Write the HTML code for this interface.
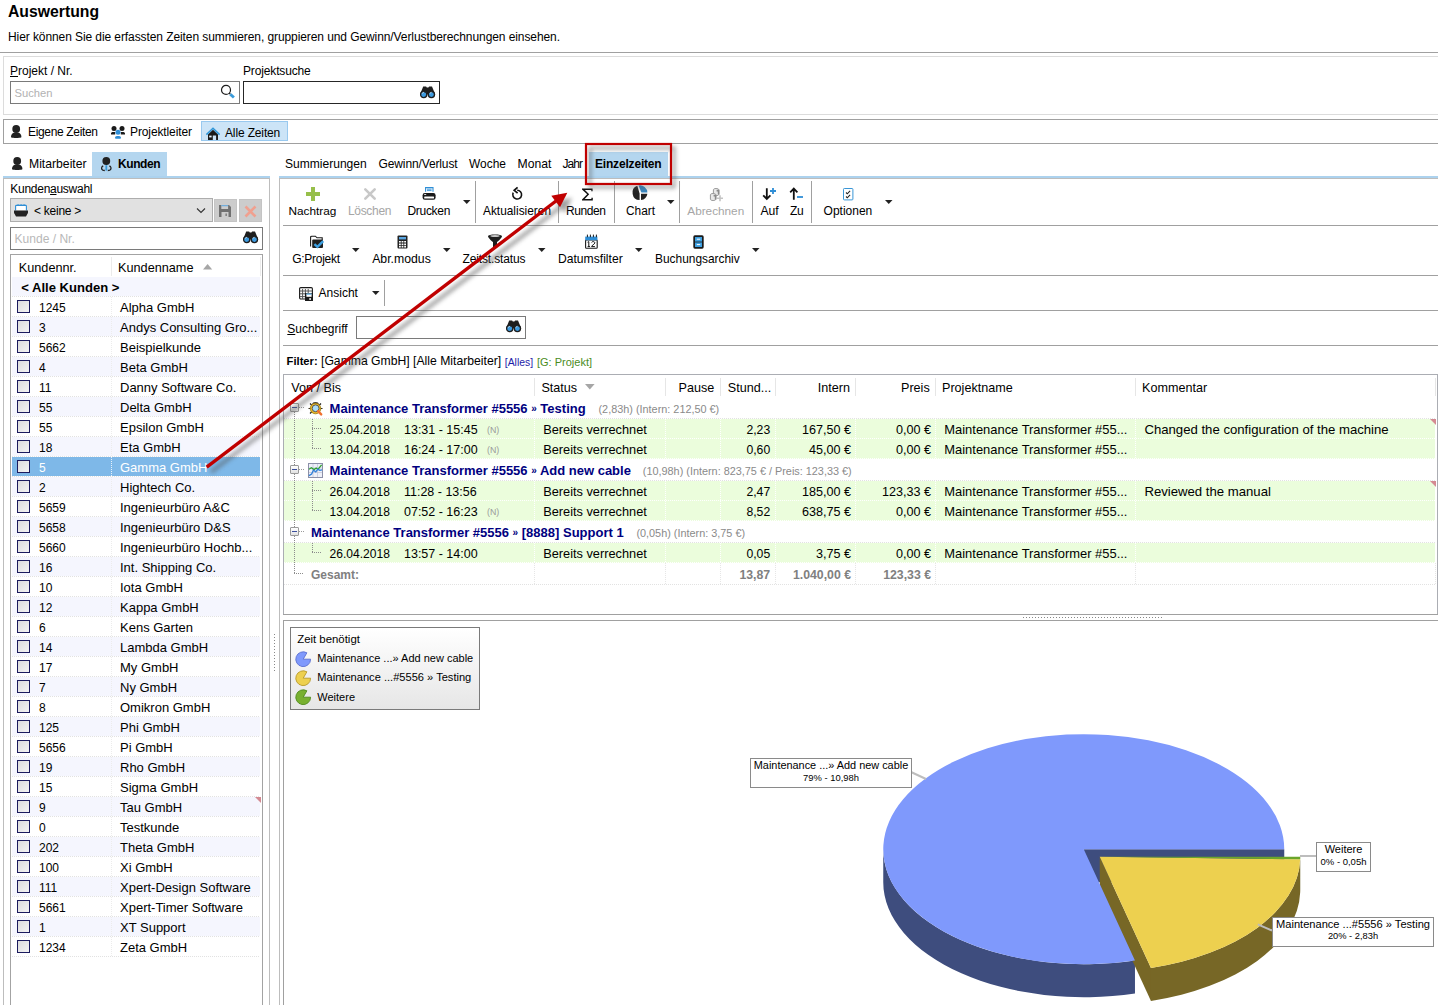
<!DOCTYPE html>
<html><head><meta charset="utf-8"><title>Auswertung</title>
<style>
html,body{margin:0;padding:0;}
body{width:1438px;height:1005px;overflow:hidden;position:relative;background:#fff;font-family:"Liberation Sans", sans-serif;}
.a{position:absolute;}
.t{position:absolute;white-space:pre;line-height:16px;font-family:"Liberation Sans", sans-serif;}
svg.a{overflow:visible;}
</style></head><body>
<div class="t" style="left:8.00px;top:4px;font-size:15.75px;font-weight:bold;color:#000;">Auswertung</div><div class="t" style="left:8.00px;top:29px;font-size:12px;font-weight:normal;color:#000;letter-spacing:-0.085px;">Hier können Sie die erfassten Zeiten summieren, gruppieren und Gewinn/Verlustberechnungen einsehen.</div><div class="a" style="left:0px;top:52px;width:1438px;height:1px;background:#a0a0a0"></div><div class="a" style="left:3px;top:56px;width:1440px;height:57px;border:1px solid #dcdcdc;box-sizing:border-box;height:59px"></div><div class="t" style="left:10.00px;top:63px;font-size:12px;font-weight:normal;color:#000;"><u>P</u>rojekt / Nr.</div><div class="a" style="left:10px;top:81px;width:230px;height:23px;border:1px solid #7a7a7a;box-sizing:border-box;background:#fff"></div><div class="t" style="left:14.50px;top:85px;font-size:11.2px;font-weight:normal;color:#b2b2b2;">Suchen</div><svg class="a" style="left:220px;top:84px;" width="18" height="18" viewBox="0 0 18 18"><circle cx="6" cy="5.9" r="4.5" fill="none" stroke="#1e1e1e" stroke-width="1.2"/><path d="M9.2 9.1l1 .9" stroke="#1e1e1e" stroke-width="1.6"/><path d="M10.3 10.2l3.6 3.3" stroke="#3a9ad9" stroke-width="2.9"/></svg><div class="t" style="left:243.00px;top:63px;font-size:12px;font-weight:normal;color:#000;letter-spacing:-0.143px;">Projektsuche</div><div class="a" style="left:243px;top:81px;width:197px;height:23px;border:1px solid #262626;box-sizing:border-box;background:#fff"></div><svg class="a" style="left:419.5px;top:85.5px;" width="16" height="13" viewBox="0 0 16 13"><path d="M3.2 .6h2.9l.7.9h1.6l.7-.9h2.9l3.3 8H0z" fill="#1e1e1e"/><circle cx="3.7" cy="8.6" r="3.1" fill="#3d9be0" stroke="#1e1e1e" stroke-width="1.3"/><circle cx="11.4" cy="8.6" r="3.1" fill="#3d9be0" stroke="#1e1e1e" stroke-width="1.3"/><path d="M2.2 7.6a1.8 1.8 0 0 1 1.6-1.3M9.9 7.6a1.8 1.8 0 0 1 1.6-1.3" stroke="#dff0fb" stroke-width=".8" fill="none"/></svg><div class="a" style="left:3px;top:119px;width:1440px;height:25px;border:1px solid #a0a0a0;box-sizing:border-box"></div><svg class="a" style="left:11px;top:125px;" width="11" height="13" viewBox="0 0 11 13"><circle cx="5.2" cy="4" r="3.9" fill="#222"/><path d="M0 12.2c0-3.4 2-4.6 5.2-4.6s5.2 1.2 5.2 4.6c-1.3.6-3 .8-5.2.8S1.3 12.8 0 12.2z" fill="#222"/></svg><div class="t" style="left:28.00px;top:124px;font-size:12px;font-weight:normal;color:#000;letter-spacing:-0.339px;">Eigene Zeiten</div><svg class="a" style="left:111px;top:125px;" width="15" height="14" viewBox="0 0 15 14"><circle cx="3" cy="3.4" r="2.5" fill="#1a1a1a"/><circle cx="11" cy="3.4" r="2.5" fill="#1a1a1a"/><path d="M0 9.6V8.4C0 7.4 1 6.9 2.2 6.9H4.2V9.6z" fill="#1a1a1a"/><path d="M14 9.6V8.4C14 7.4 13 6.9 11.8 6.9H9.8V9.6z" fill="#1a1a1a"/><circle cx="7" cy="7.3" r="2.5" fill="#2f8ed6"/><path d="M4 13c0-1.4.8-2.1 2-2.1h2c1.2 0 2 .7 2 2.1 0 .5-.4.8-1 .8H5c-.6 0-1-.3-1-.8z" fill="#2f8ed6"/></svg><div class="t" style="left:130.00px;top:124px;font-size:12px;font-weight:normal;color:#000;letter-spacing:-0.113px;">Projektleiter</div><div class="a" style="left:201px;top:121px;width:87px;height:20px;background:#cce4f7;border:1px solid #99c9ef;box-sizing:border-box"></div><svg class="a" style="left:205px;top:126px;" width="16" height="16" viewBox="0 0 16 16"><path d="M3 8.6L8 3.8l5 4.8v5.4h-1.9V9.4H7.8v4.6H3z" fill="#1a1a1a"/><rect x="4.2" y="9.6" width="2.4" height="1.8" fill="#e8f6ff"/><path d="M1.4 8.6L8 2.2l6.6 6.4" fill="none" stroke="#3096d8" stroke-width="1.5"/></svg><div class="t" style="left:225.00px;top:125px;font-size:12px;font-weight:normal;color:#000;letter-spacing:-0.140px;">Alle Zeiten</div><svg class="a" style="left:12px;top:157px;" width="11" height="13" viewBox="0 0 11 13"><circle cx="5.2" cy="4" r="3.9" fill="#222"/><path d="M0 12.2c0-3.4 2-4.6 5.2-4.6s5.2 1.2 5.2 4.6c-1.3.6-3 .8-5.2.8S1.3 12.8 0 12.2z" fill="#222"/></svg><div class="t" style="left:29.00px;top:156px;font-size:12.2px;font-weight:normal;color:#000;">Mitarbeiter</div><div class="a" style="left:92px;top:152px;width:75px;height:24px;background:#b4d6ef"></div><svg class="a" style="left:101px;top:157px;" width="11" height="15" viewBox="0 0 11 15"><circle cx="5.3" cy="4" r="3.9" fill="#222"/><path d="M2.2 8.8C.6 9.6.4 11.4.8 12.2c.4.8 1.6 1.3 3 1.3M8.4 8.8c1.6.8 1.8 2.6 1.4 3.4-.4.8-1.6 1.3-3 1.3" fill="none" stroke="#222" stroke-width="1.3"/><path d="M5.3 8.2v5.4" stroke="#3a9ad9" stroke-width="1.8"/></svg><div class="t" style="left:118.00px;top:156px;font-size:12px;font-weight:bold;color:#000;letter-spacing:-0.434px;">Kunden</div><div class="a" style="left:3px;top:176px;width:267px;height:2px;background:#acd2ee"></div><div class="a" style="left:3px;top:178px;width:267px;height:840px;border:1px solid #bdbdbd;box-sizing:border-box"></div><div class="t" style="left:10.30px;top:181px;font-size:12px;font-weight:normal;color:#000;letter-spacing:-0.27px;">Kunden<u>a</u>uswahl</div><div class="a" style="left:10px;top:198px;width:203px;height:24px;background:#e1e1e1;border:1px solid #adadad;box-sizing:border-box"></div><svg class="a" style="left:14px;top:204px;" width="14" height="13" viewBox="0 0 14 13"><path d="M1.6 6.4V2.2c0-.5.3-.8.8-.8h9.2c.5 0 .8.3.8.8v4.2" fill="#fff" stroke="#2f8ed6" stroke-width="1.1"/><path d="M3.2 1.2h2M6.2 1.2h2M9.2 1.2h2" stroke="#2f8ed6" stroke-width="1.3"/><path d="M0 6.4h14v2.2c0 .6-.2.9-.5 1.2L12 12.4H2L.5 9.8C.2 9.5 0 9.2 0 8.6z" fill="#222"/></svg><div class="t" style="left:34.00px;top:203px;font-size:12px;font-weight:normal;color:#000;letter-spacing:-0.259px;">&lt; keine &gt;</div><svg class="a" style="left:196px;top:207px;" width="10" height="7" viewBox="0 0 10 7"><path d="M1 1.5l4 4 4-4" fill="none" stroke="#333" stroke-width="1.1"/></svg><div class="a" style="left:214px;top:199px;width:23px;height:23px;background:#cccccc;border:1px solid #c4c4c4;box-sizing:border-box"></div><svg class="a" style="left:219px;top:205px;" width="12" height="12" viewBox="0 0 12 12"><path d="M0 0h10l2 2v10H0z" fill="#707070"/><path d="M2.3 0h6.8v4H2.3z" fill="#cccccc"/><path d="M2.3 .2h6.8v1H2.3z" fill="#5aa5e0"/><path d="M2.5 7h7v5h-7z" fill="#cccccc"/><path d="M6.5 8.5h1.3v2.5H6.5z" fill="#707070"/></svg><div class="a" style="left:239px;top:199px;width:23px;height:23px;background:#cccccc;border:1px solid #c4c4c4;box-sizing:border-box"></div><svg class="a" style="left:244px;top:205px;" width="13" height="13" viewBox="0 0 13 13"><path d="M1.5 1.5l10 10M11.5 1.5l-10 10" stroke="#f0a08f" stroke-width="2.6"/></svg><div class="a" style="left:10px;top:227px;width:253px;height:23px;border:1px solid #7a7a7a;box-sizing:border-box;background:#fff"></div><div class="t" style="left:14.50px;top:231px;font-size:12.05px;font-weight:normal;color:#b8b8b8;">Kunde / Nr.</div><svg class="a" style="left:242.5px;top:231px;" width="16" height="13" viewBox="0 0 16 13"><path d="M3.2 .6h2.9l.7.9h1.6l.7-.9h2.9l3.3 8H0z" fill="#1e1e1e"/><circle cx="3.7" cy="8.6" r="3.1" fill="#3d9be0" stroke="#1e1e1e" stroke-width="1.3"/><circle cx="11.4" cy="8.6" r="3.1" fill="#3d9be0" stroke="#1e1e1e" stroke-width="1.3"/><path d="M2.2 7.6a1.8 1.8 0 0 1 1.6-1.3M9.9 7.6a1.8 1.8 0 0 1 1.6-1.3" stroke="#dff0fb" stroke-width=".8" fill="none"/></svg><div class="a" style="left:10px;top:254px;width:253px;height:770px;border:1px solid #a3a3a3;box-sizing:border-box"></div><div class="t" style="left:18.80px;top:260px;font-size:12.7px;font-weight:normal;color:#000;">Kundennr.</div><div class="a" style="left:111px;top:257px;width:1px;height:19px;background:#ebebeb"></div><div class="t" style="left:118.00px;top:260px;font-size:12.7px;font-weight:normal;color:#000;">Kundenname</div><svg class="a" style="left:203px;top:264px;" width="10" height="6" viewBox="0 0 10 6"><path d="M0 5.5L4.6 0l4.6 5.5z" fill="#a6a6a6"/></svg><div class="a" style="left:260px;top:257px;width:1px;height:19px;background:#ebebeb"></div><div class="a" style="left:12px;top:277px;width:248px;height:19px;background:#f5f6fe"></div><div class="a" style="left:12px;top:296px;width:248px;height:1px;background-image:linear-gradient(to right,#e2e2e2 50%,transparent 50%);background-size:2px 1px;"></div><div class="t" style="left:21.30px;top:280px;font-size:13.05px;font-weight:bold;color:#000;">&lt; Alle Kunden &gt;</div><div class="a" style="left:12px;top:316px;width:248px;height:1px;background-image:linear-gradient(to right,#e2e2e2 50%,transparent 50%);background-size:2px 1px;"></div><div class="a" style="left:111px;top:297px;width:1px;height:19px;background-image:linear-gradient(to bottom,#ececec 50%,transparent 50%);background-size:1px 2px;"></div><div class="a" style="left:17px;top:300px;width:13px;height:13px;border:1px solid #1b1b5e;box-sizing:border-box;background:linear-gradient(135deg,#dcdcdc,#f4f4f4)"></div><div class="t" style="left:39.00px;top:300px;font-size:12.0px;font-weight:normal;color:#000;">1245</div><div class="t" style="left:120.00px;top:300px;font-size:13.0px;font-weight:normal;color:#000;">Alpha GmbH</div><div class="a" style="left:12px;top:317px;width:248px;height:19px;background:#f5f6fe"></div><div class="a" style="left:12px;top:336px;width:248px;height:1px;background-image:linear-gradient(to right,#e2e2e2 50%,transparent 50%);background-size:2px 1px;"></div><div class="a" style="left:111px;top:317px;width:1px;height:19px;background-image:linear-gradient(to bottom,#ececec 50%,transparent 50%);background-size:1px 2px;"></div><div class="a" style="left:17px;top:320px;width:13px;height:13px;border:1px solid #1b1b5e;box-sizing:border-box;background:linear-gradient(135deg,#dcdcdc,#f4f4f4)"></div><div class="t" style="left:39.00px;top:320px;font-size:12.0px;font-weight:normal;color:#000;">3</div><div class="t" style="left:120.00px;top:320px;font-size:13.0px;font-weight:normal;color:#000;">Andys Consulting Gro...</div><div class="a" style="left:12px;top:356px;width:248px;height:1px;background-image:linear-gradient(to right,#e2e2e2 50%,transparent 50%);background-size:2px 1px;"></div><div class="a" style="left:111px;top:337px;width:1px;height:19px;background-image:linear-gradient(to bottom,#ececec 50%,transparent 50%);background-size:1px 2px;"></div><div class="a" style="left:17px;top:340px;width:13px;height:13px;border:1px solid #1b1b5e;box-sizing:border-box;background:linear-gradient(135deg,#dcdcdc,#f4f4f4)"></div><div class="t" style="left:39.00px;top:340px;font-size:12.0px;font-weight:normal;color:#000;">5662</div><div class="t" style="left:120.00px;top:340px;font-size:13.0px;font-weight:normal;color:#000;">Beispielkunde</div><div class="a" style="left:12px;top:357px;width:248px;height:19px;background:#f5f6fe"></div><div class="a" style="left:12px;top:376px;width:248px;height:1px;background-image:linear-gradient(to right,#e2e2e2 50%,transparent 50%);background-size:2px 1px;"></div><div class="a" style="left:111px;top:357px;width:1px;height:19px;background-image:linear-gradient(to bottom,#ececec 50%,transparent 50%);background-size:1px 2px;"></div><div class="a" style="left:17px;top:360px;width:13px;height:13px;border:1px solid #1b1b5e;box-sizing:border-box;background:linear-gradient(135deg,#dcdcdc,#f4f4f4)"></div><div class="t" style="left:39.00px;top:360px;font-size:12.0px;font-weight:normal;color:#000;">4</div><div class="t" style="left:120.00px;top:360px;font-size:13.0px;font-weight:normal;color:#000;">Beta GmbH</div><div class="a" style="left:12px;top:396px;width:248px;height:1px;background-image:linear-gradient(to right,#e2e2e2 50%,transparent 50%);background-size:2px 1px;"></div><div class="a" style="left:111px;top:377px;width:1px;height:19px;background-image:linear-gradient(to bottom,#ececec 50%,transparent 50%);background-size:1px 2px;"></div><div class="a" style="left:17px;top:380px;width:13px;height:13px;border:1px solid #1b1b5e;box-sizing:border-box;background:linear-gradient(135deg,#dcdcdc,#f4f4f4)"></div><div class="t" style="left:39.00px;top:380px;font-size:12.0px;font-weight:normal;color:#000;">11</div><div class="t" style="left:120.00px;top:380px;font-size:13.0px;font-weight:normal;color:#000;">Danny Software Co.</div><div class="a" style="left:12px;top:397px;width:248px;height:19px;background:#f5f6fe"></div><div class="a" style="left:12px;top:416px;width:248px;height:1px;background-image:linear-gradient(to right,#e2e2e2 50%,transparent 50%);background-size:2px 1px;"></div><div class="a" style="left:111px;top:397px;width:1px;height:19px;background-image:linear-gradient(to bottom,#ececec 50%,transparent 50%);background-size:1px 2px;"></div><div class="a" style="left:17px;top:400px;width:13px;height:13px;border:1px solid #1b1b5e;box-sizing:border-box;background:linear-gradient(135deg,#dcdcdc,#f4f4f4)"></div><div class="t" style="left:39.00px;top:400px;font-size:12.0px;font-weight:normal;color:#000;">55</div><div class="t" style="left:120.00px;top:400px;font-size:13.0px;font-weight:normal;color:#000;">Delta GmbH</div><div class="a" style="left:12px;top:436px;width:248px;height:1px;background-image:linear-gradient(to right,#e2e2e2 50%,transparent 50%);background-size:2px 1px;"></div><div class="a" style="left:111px;top:417px;width:1px;height:19px;background-image:linear-gradient(to bottom,#ececec 50%,transparent 50%);background-size:1px 2px;"></div><div class="a" style="left:17px;top:420px;width:13px;height:13px;border:1px solid #1b1b5e;box-sizing:border-box;background:linear-gradient(135deg,#dcdcdc,#f4f4f4)"></div><div class="t" style="left:39.00px;top:420px;font-size:12.0px;font-weight:normal;color:#000;">55</div><div class="t" style="left:120.00px;top:420px;font-size:13.0px;font-weight:normal;color:#000;">Epsilon GmbH</div><div class="a" style="left:12px;top:437px;width:248px;height:19px;background:#f5f6fe"></div><div class="a" style="left:12px;top:456px;width:248px;height:1px;background-image:linear-gradient(to right,#e2e2e2 50%,transparent 50%);background-size:2px 1px;"></div><div class="a" style="left:111px;top:437px;width:1px;height:19px;background-image:linear-gradient(to bottom,#ececec 50%,transparent 50%);background-size:1px 2px;"></div><div class="a" style="left:17px;top:440px;width:13px;height:13px;border:1px solid #1b1b5e;box-sizing:border-box;background:linear-gradient(135deg,#dcdcdc,#f4f4f4)"></div><div class="t" style="left:39.00px;top:440px;font-size:12.0px;font-weight:normal;color:#000;">18</div><div class="t" style="left:120.00px;top:440px;font-size:13.0px;font-weight:normal;color:#000;">Eta GmbH</div><div class="a" style="left:12px;top:457px;width:248px;height:19px;background:#7eb8e8"></div><div class="a" style="left:111px;top:457px;width:1px;height:19px;background-image:linear-gradient(to bottom,#e8f2fb 50%,transparent 50%);background-size:1px 2px;"></div><div class="a" style="left:12px;top:476px;width:248px;height:1px;background-image:linear-gradient(to right,#e2e2e2 50%,transparent 50%);background-size:2px 1px;"></div><div class="a" style="left:17px;top:460px;width:13px;height:13px;border:1px solid #1b1b5e;box-sizing:border-box;background:linear-gradient(135deg,#dcdcdc,#f4f4f4)"></div><div class="t" style="left:39.00px;top:460px;font-size:12.0px;font-weight:normal;color:#fff;">5</div><div class="t" style="left:120.00px;top:460px;font-size:13.0px;font-weight:normal;color:#fff;">Gamma GmbH</div><div class="a" style="left:12px;top:477px;width:248px;height:19px;background:#f5f6fe"></div><div class="a" style="left:12px;top:496px;width:248px;height:1px;background-image:linear-gradient(to right,#e2e2e2 50%,transparent 50%);background-size:2px 1px;"></div><div class="a" style="left:111px;top:477px;width:1px;height:19px;background-image:linear-gradient(to bottom,#ececec 50%,transparent 50%);background-size:1px 2px;"></div><div class="a" style="left:17px;top:480px;width:13px;height:13px;border:1px solid #1b1b5e;box-sizing:border-box;background:linear-gradient(135deg,#dcdcdc,#f4f4f4)"></div><div class="t" style="left:39.00px;top:480px;font-size:12.0px;font-weight:normal;color:#000;">2</div><div class="t" style="left:120.00px;top:480px;font-size:13.0px;font-weight:normal;color:#000;">Hightech Co.</div><div class="a" style="left:12px;top:516px;width:248px;height:1px;background-image:linear-gradient(to right,#e2e2e2 50%,transparent 50%);background-size:2px 1px;"></div><div class="a" style="left:111px;top:497px;width:1px;height:19px;background-image:linear-gradient(to bottom,#ececec 50%,transparent 50%);background-size:1px 2px;"></div><div class="a" style="left:17px;top:500px;width:13px;height:13px;border:1px solid #1b1b5e;box-sizing:border-box;background:linear-gradient(135deg,#dcdcdc,#f4f4f4)"></div><div class="t" style="left:39.00px;top:500px;font-size:12.0px;font-weight:normal;color:#000;">5659</div><div class="t" style="left:120.00px;top:500px;font-size:13.0px;font-weight:normal;color:#000;">Ingenieurbüro A&amp;C</div><div class="a" style="left:12px;top:517px;width:248px;height:19px;background:#f5f6fe"></div><div class="a" style="left:12px;top:536px;width:248px;height:1px;background-image:linear-gradient(to right,#e2e2e2 50%,transparent 50%);background-size:2px 1px;"></div><div class="a" style="left:111px;top:517px;width:1px;height:19px;background-image:linear-gradient(to bottom,#ececec 50%,transparent 50%);background-size:1px 2px;"></div><div class="a" style="left:17px;top:520px;width:13px;height:13px;border:1px solid #1b1b5e;box-sizing:border-box;background:linear-gradient(135deg,#dcdcdc,#f4f4f4)"></div><div class="t" style="left:39.00px;top:520px;font-size:12.0px;font-weight:normal;color:#000;">5658</div><div class="t" style="left:120.00px;top:520px;font-size:13.0px;font-weight:normal;color:#000;">Ingenieurbüro D&amp;S</div><div class="a" style="left:12px;top:556px;width:248px;height:1px;background-image:linear-gradient(to right,#e2e2e2 50%,transparent 50%);background-size:2px 1px;"></div><div class="a" style="left:111px;top:537px;width:1px;height:19px;background-image:linear-gradient(to bottom,#ececec 50%,transparent 50%);background-size:1px 2px;"></div><div class="a" style="left:17px;top:540px;width:13px;height:13px;border:1px solid #1b1b5e;box-sizing:border-box;background:linear-gradient(135deg,#dcdcdc,#f4f4f4)"></div><div class="t" style="left:39.00px;top:540px;font-size:12.0px;font-weight:normal;color:#000;">5660</div><div class="t" style="left:120.00px;top:540px;font-size:13.0px;font-weight:normal;color:#000;">Ingenieurbüro Hochb...</div><div class="a" style="left:12px;top:557px;width:248px;height:19px;background:#f5f6fe"></div><div class="a" style="left:12px;top:576px;width:248px;height:1px;background-image:linear-gradient(to right,#e2e2e2 50%,transparent 50%);background-size:2px 1px;"></div><div class="a" style="left:111px;top:557px;width:1px;height:19px;background-image:linear-gradient(to bottom,#ececec 50%,transparent 50%);background-size:1px 2px;"></div><div class="a" style="left:17px;top:560px;width:13px;height:13px;border:1px solid #1b1b5e;box-sizing:border-box;background:linear-gradient(135deg,#dcdcdc,#f4f4f4)"></div><div class="t" style="left:39.00px;top:560px;font-size:12.0px;font-weight:normal;color:#000;">16</div><div class="t" style="left:120.00px;top:560px;font-size:13.0px;font-weight:normal;color:#000;">Int. Shipping Co.</div><div class="a" style="left:12px;top:596px;width:248px;height:1px;background-image:linear-gradient(to right,#e2e2e2 50%,transparent 50%);background-size:2px 1px;"></div><div class="a" style="left:111px;top:577px;width:1px;height:19px;background-image:linear-gradient(to bottom,#ececec 50%,transparent 50%);background-size:1px 2px;"></div><div class="a" style="left:17px;top:580px;width:13px;height:13px;border:1px solid #1b1b5e;box-sizing:border-box;background:linear-gradient(135deg,#dcdcdc,#f4f4f4)"></div><div class="t" style="left:39.00px;top:580px;font-size:12.0px;font-weight:normal;color:#000;">10</div><div class="t" style="left:120.00px;top:580px;font-size:13.0px;font-weight:normal;color:#000;">Iota GmbH</div><div class="a" style="left:12px;top:597px;width:248px;height:19px;background:#f5f6fe"></div><div class="a" style="left:12px;top:616px;width:248px;height:1px;background-image:linear-gradient(to right,#e2e2e2 50%,transparent 50%);background-size:2px 1px;"></div><div class="a" style="left:111px;top:597px;width:1px;height:19px;background-image:linear-gradient(to bottom,#ececec 50%,transparent 50%);background-size:1px 2px;"></div><div class="a" style="left:17px;top:600px;width:13px;height:13px;border:1px solid #1b1b5e;box-sizing:border-box;background:linear-gradient(135deg,#dcdcdc,#f4f4f4)"></div><div class="t" style="left:39.00px;top:600px;font-size:12.0px;font-weight:normal;color:#000;">12</div><div class="t" style="left:120.00px;top:600px;font-size:13.0px;font-weight:normal;color:#000;">Kappa GmbH</div><div class="a" style="left:12px;top:636px;width:248px;height:1px;background-image:linear-gradient(to right,#e2e2e2 50%,transparent 50%);background-size:2px 1px;"></div><div class="a" style="left:111px;top:617px;width:1px;height:19px;background-image:linear-gradient(to bottom,#ececec 50%,transparent 50%);background-size:1px 2px;"></div><div class="a" style="left:17px;top:620px;width:13px;height:13px;border:1px solid #1b1b5e;box-sizing:border-box;background:linear-gradient(135deg,#dcdcdc,#f4f4f4)"></div><div class="t" style="left:39.00px;top:620px;font-size:12.0px;font-weight:normal;color:#000;">6</div><div class="t" style="left:120.00px;top:620px;font-size:13.0px;font-weight:normal;color:#000;">Kens Garten</div><div class="a" style="left:12px;top:637px;width:248px;height:19px;background:#f5f6fe"></div><div class="a" style="left:12px;top:656px;width:248px;height:1px;background-image:linear-gradient(to right,#e2e2e2 50%,transparent 50%);background-size:2px 1px;"></div><div class="a" style="left:111px;top:637px;width:1px;height:19px;background-image:linear-gradient(to bottom,#ececec 50%,transparent 50%);background-size:1px 2px;"></div><div class="a" style="left:17px;top:640px;width:13px;height:13px;border:1px solid #1b1b5e;box-sizing:border-box;background:linear-gradient(135deg,#dcdcdc,#f4f4f4)"></div><div class="t" style="left:39.00px;top:640px;font-size:12.0px;font-weight:normal;color:#000;">14</div><div class="t" style="left:120.00px;top:640px;font-size:13.0px;font-weight:normal;color:#000;">Lambda GmbH</div><div class="a" style="left:12px;top:676px;width:248px;height:1px;background-image:linear-gradient(to right,#e2e2e2 50%,transparent 50%);background-size:2px 1px;"></div><div class="a" style="left:111px;top:657px;width:1px;height:19px;background-image:linear-gradient(to bottom,#ececec 50%,transparent 50%);background-size:1px 2px;"></div><div class="a" style="left:17px;top:660px;width:13px;height:13px;border:1px solid #1b1b5e;box-sizing:border-box;background:linear-gradient(135deg,#dcdcdc,#f4f4f4)"></div><div class="t" style="left:39.00px;top:660px;font-size:12.0px;font-weight:normal;color:#000;">17</div><div class="t" style="left:120.00px;top:660px;font-size:13.0px;font-weight:normal;color:#000;">My GmbH</div><div class="a" style="left:12px;top:677px;width:248px;height:19px;background:#f5f6fe"></div><div class="a" style="left:12px;top:696px;width:248px;height:1px;background-image:linear-gradient(to right,#e2e2e2 50%,transparent 50%);background-size:2px 1px;"></div><div class="a" style="left:111px;top:677px;width:1px;height:19px;background-image:linear-gradient(to bottom,#ececec 50%,transparent 50%);background-size:1px 2px;"></div><div class="a" style="left:17px;top:680px;width:13px;height:13px;border:1px solid #1b1b5e;box-sizing:border-box;background:linear-gradient(135deg,#dcdcdc,#f4f4f4)"></div><div class="t" style="left:39.00px;top:680px;font-size:12.0px;font-weight:normal;color:#000;">7</div><div class="t" style="left:120.00px;top:680px;font-size:13.0px;font-weight:normal;color:#000;">Ny GmbH</div><div class="a" style="left:12px;top:716px;width:248px;height:1px;background-image:linear-gradient(to right,#e2e2e2 50%,transparent 50%);background-size:2px 1px;"></div><div class="a" style="left:111px;top:697px;width:1px;height:19px;background-image:linear-gradient(to bottom,#ececec 50%,transparent 50%);background-size:1px 2px;"></div><div class="a" style="left:17px;top:700px;width:13px;height:13px;border:1px solid #1b1b5e;box-sizing:border-box;background:linear-gradient(135deg,#dcdcdc,#f4f4f4)"></div><div class="t" style="left:39.00px;top:700px;font-size:12.0px;font-weight:normal;color:#000;">8</div><div class="t" style="left:120.00px;top:700px;font-size:13.0px;font-weight:normal;color:#000;">Omikron GmbH</div><div class="a" style="left:12px;top:717px;width:248px;height:19px;background:#f5f6fe"></div><div class="a" style="left:12px;top:736px;width:248px;height:1px;background-image:linear-gradient(to right,#e2e2e2 50%,transparent 50%);background-size:2px 1px;"></div><div class="a" style="left:111px;top:717px;width:1px;height:19px;background-image:linear-gradient(to bottom,#ececec 50%,transparent 50%);background-size:1px 2px;"></div><div class="a" style="left:17px;top:720px;width:13px;height:13px;border:1px solid #1b1b5e;box-sizing:border-box;background:linear-gradient(135deg,#dcdcdc,#f4f4f4)"></div><div class="t" style="left:39.00px;top:720px;font-size:12.0px;font-weight:normal;color:#000;">125</div><div class="t" style="left:120.00px;top:720px;font-size:13.0px;font-weight:normal;color:#000;">Phi GmbH</div><div class="a" style="left:12px;top:756px;width:248px;height:1px;background-image:linear-gradient(to right,#e2e2e2 50%,transparent 50%);background-size:2px 1px;"></div><div class="a" style="left:111px;top:737px;width:1px;height:19px;background-image:linear-gradient(to bottom,#ececec 50%,transparent 50%);background-size:1px 2px;"></div><div class="a" style="left:17px;top:740px;width:13px;height:13px;border:1px solid #1b1b5e;box-sizing:border-box;background:linear-gradient(135deg,#dcdcdc,#f4f4f4)"></div><div class="t" style="left:39.00px;top:740px;font-size:12.0px;font-weight:normal;color:#000;">5656</div><div class="t" style="left:120.00px;top:740px;font-size:13.0px;font-weight:normal;color:#000;">Pi GmbH</div><div class="a" style="left:12px;top:757px;width:248px;height:19px;background:#f5f6fe"></div><div class="a" style="left:12px;top:776px;width:248px;height:1px;background-image:linear-gradient(to right,#e2e2e2 50%,transparent 50%);background-size:2px 1px;"></div><div class="a" style="left:111px;top:757px;width:1px;height:19px;background-image:linear-gradient(to bottom,#ececec 50%,transparent 50%);background-size:1px 2px;"></div><div class="a" style="left:17px;top:760px;width:13px;height:13px;border:1px solid #1b1b5e;box-sizing:border-box;background:linear-gradient(135deg,#dcdcdc,#f4f4f4)"></div><div class="t" style="left:39.00px;top:760px;font-size:12.0px;font-weight:normal;color:#000;">19</div><div class="t" style="left:120.00px;top:760px;font-size:13.0px;font-weight:normal;color:#000;">Rho GmbH</div><div class="a" style="left:12px;top:796px;width:248px;height:1px;background-image:linear-gradient(to right,#e2e2e2 50%,transparent 50%);background-size:2px 1px;"></div><div class="a" style="left:111px;top:777px;width:1px;height:19px;background-image:linear-gradient(to bottom,#ececec 50%,transparent 50%);background-size:1px 2px;"></div><div class="a" style="left:17px;top:780px;width:13px;height:13px;border:1px solid #1b1b5e;box-sizing:border-box;background:linear-gradient(135deg,#dcdcdc,#f4f4f4)"></div><div class="t" style="left:39.00px;top:780px;font-size:12.0px;font-weight:normal;color:#000;">15</div><div class="t" style="left:120.00px;top:780px;font-size:13.0px;font-weight:normal;color:#000;">Sigma GmbH</div><div class="a" style="left:12px;top:797px;width:248px;height:19px;background:#f5f6fe"></div><div class="a" style="left:12px;top:816px;width:248px;height:1px;background-image:linear-gradient(to right,#e2e2e2 50%,transparent 50%);background-size:2px 1px;"></div><div class="a" style="left:111px;top:797px;width:1px;height:19px;background-image:linear-gradient(to bottom,#ececec 50%,transparent 50%);background-size:1px 2px;"></div><div class="a" style="left:17px;top:800px;width:13px;height:13px;border:1px solid #1b1b5e;box-sizing:border-box;background:linear-gradient(135deg,#dcdcdc,#f4f4f4)"></div><div class="t" style="left:39.00px;top:800px;font-size:12.0px;font-weight:normal;color:#000;">9</div><div class="t" style="left:120.00px;top:800px;font-size:13.0px;font-weight:normal;color:#000;">Tau GmbH</div><div class="a" style="left:12px;top:836px;width:248px;height:1px;background-image:linear-gradient(to right,#e2e2e2 50%,transparent 50%);background-size:2px 1px;"></div><div class="a" style="left:111px;top:817px;width:1px;height:19px;background-image:linear-gradient(to bottom,#ececec 50%,transparent 50%);background-size:1px 2px;"></div><div class="a" style="left:17px;top:820px;width:13px;height:13px;border:1px solid #1b1b5e;box-sizing:border-box;background:linear-gradient(135deg,#dcdcdc,#f4f4f4)"></div><div class="t" style="left:39.00px;top:820px;font-size:12.0px;font-weight:normal;color:#000;">0</div><div class="t" style="left:120.00px;top:820px;font-size:13.0px;font-weight:normal;color:#000;">Testkunde</div><div class="a" style="left:12px;top:837px;width:248px;height:19px;background:#f5f6fe"></div><div class="a" style="left:12px;top:856px;width:248px;height:1px;background-image:linear-gradient(to right,#e2e2e2 50%,transparent 50%);background-size:2px 1px;"></div><div class="a" style="left:111px;top:837px;width:1px;height:19px;background-image:linear-gradient(to bottom,#ececec 50%,transparent 50%);background-size:1px 2px;"></div><div class="a" style="left:17px;top:840px;width:13px;height:13px;border:1px solid #1b1b5e;box-sizing:border-box;background:linear-gradient(135deg,#dcdcdc,#f4f4f4)"></div><div class="t" style="left:39.00px;top:840px;font-size:12.0px;font-weight:normal;color:#000;">202</div><div class="t" style="left:120.00px;top:840px;font-size:13.0px;font-weight:normal;color:#000;">Theta GmbH</div><div class="a" style="left:12px;top:876px;width:248px;height:1px;background-image:linear-gradient(to right,#e2e2e2 50%,transparent 50%);background-size:2px 1px;"></div><div class="a" style="left:111px;top:857px;width:1px;height:19px;background-image:linear-gradient(to bottom,#ececec 50%,transparent 50%);background-size:1px 2px;"></div><div class="a" style="left:17px;top:860px;width:13px;height:13px;border:1px solid #1b1b5e;box-sizing:border-box;background:linear-gradient(135deg,#dcdcdc,#f4f4f4)"></div><div class="t" style="left:39.00px;top:860px;font-size:12.0px;font-weight:normal;color:#000;">100</div><div class="t" style="left:120.00px;top:860px;font-size:13.0px;font-weight:normal;color:#000;">Xi GmbH</div><div class="a" style="left:12px;top:877px;width:248px;height:19px;background:#f5f6fe"></div><div class="a" style="left:12px;top:896px;width:248px;height:1px;background-image:linear-gradient(to right,#e2e2e2 50%,transparent 50%);background-size:2px 1px;"></div><div class="a" style="left:111px;top:877px;width:1px;height:19px;background-image:linear-gradient(to bottom,#ececec 50%,transparent 50%);background-size:1px 2px;"></div><div class="a" style="left:17px;top:880px;width:13px;height:13px;border:1px solid #1b1b5e;box-sizing:border-box;background:linear-gradient(135deg,#dcdcdc,#f4f4f4)"></div><div class="t" style="left:39.00px;top:880px;font-size:12.0px;font-weight:normal;color:#000;">111</div><div class="t" style="left:120.00px;top:880px;font-size:13.0px;font-weight:normal;color:#000;">Xpert-Design Software</div><div class="a" style="left:12px;top:916px;width:248px;height:1px;background-image:linear-gradient(to right,#e2e2e2 50%,transparent 50%);background-size:2px 1px;"></div><div class="a" style="left:111px;top:897px;width:1px;height:19px;background-image:linear-gradient(to bottom,#ececec 50%,transparent 50%);background-size:1px 2px;"></div><div class="a" style="left:17px;top:900px;width:13px;height:13px;border:1px solid #1b1b5e;box-sizing:border-box;background:linear-gradient(135deg,#dcdcdc,#f4f4f4)"></div><div class="t" style="left:39.00px;top:900px;font-size:12.0px;font-weight:normal;color:#000;">5661</div><div class="t" style="left:120.00px;top:900px;font-size:13.0px;font-weight:normal;color:#000;">Xpert-Timer Software</div><div class="a" style="left:12px;top:917px;width:248px;height:19px;background:#f5f6fe"></div><div class="a" style="left:12px;top:936px;width:248px;height:1px;background-image:linear-gradient(to right,#e2e2e2 50%,transparent 50%);background-size:2px 1px;"></div><div class="a" style="left:111px;top:917px;width:1px;height:19px;background-image:linear-gradient(to bottom,#ececec 50%,transparent 50%);background-size:1px 2px;"></div><div class="a" style="left:17px;top:920px;width:13px;height:13px;border:1px solid #1b1b5e;box-sizing:border-box;background:linear-gradient(135deg,#dcdcdc,#f4f4f4)"></div><div class="t" style="left:39.00px;top:920px;font-size:12.0px;font-weight:normal;color:#000;">1</div><div class="t" style="left:120.00px;top:920px;font-size:13.0px;font-weight:normal;color:#000;">XT Support</div><div class="a" style="left:12px;top:956px;width:248px;height:1px;background-image:linear-gradient(to right,#e2e2e2 50%,transparent 50%);background-size:2px 1px;"></div><div class="a" style="left:111px;top:937px;width:1px;height:19px;background-image:linear-gradient(to bottom,#ececec 50%,transparent 50%);background-size:1px 2px;"></div><div class="a" style="left:17px;top:940px;width:13px;height:13px;border:1px solid #1b1b5e;box-sizing:border-box;background:linear-gradient(135deg,#dcdcdc,#f4f4f4)"></div><div class="t" style="left:39.00px;top:940px;font-size:12.0px;font-weight:normal;color:#000;">1234</div><div class="t" style="left:120.00px;top:940px;font-size:13.0px;font-weight:normal;color:#000;">Zeta GmbH</div><svg class="a" style="left:255px;top:797px;" width="6" height="6" viewBox="0 0 6 6"><path d="M0 0h6v6z" fill="#d48a92"/></svg><div class="a" style="left:274px;top:634px;width:1px;height:1px;background:#888"></div><div class="a" style="left:274px;top:637px;width:1px;height:1px;background:#888"></div><div class="a" style="left:274px;top:640px;width:1px;height:1px;background:#888"></div><div class="a" style="left:274px;top:643px;width:1px;height:1px;background:#888"></div><div class="a" style="left:274px;top:646px;width:1px;height:1px;background:#888"></div><div class="a" style="left:274px;top:649px;width:1px;height:1px;background:#888"></div><div class="a" style="left:274px;top:652px;width:1px;height:1px;background:#888"></div><div class="a" style="left:274px;top:655px;width:1px;height:1px;background:#888"></div><div class="a" style="left:274px;top:658px;width:1px;height:1px;background:#888"></div><div class="a" style="left:274px;top:661px;width:1px;height:1px;background:#888"></div><div class="a" style="left:274px;top:664px;width:1px;height:1px;background:#888"></div><div class="a" style="left:274px;top:667px;width:1px;height:1px;background:#888"></div><div class="a" style="left:274px;top:670px;width:1px;height:1px;background:#888"></div><div class="t" style="left:285.00px;top:156px;font-size:12.05px;font-weight:normal;color:#000;">Summierungen</div><div class="t" style="left:378.60px;top:156px;font-size:12px;font-weight:normal;color:#000;letter-spacing:-0.132px;">Gewinn/Verlust</div><div class="t" style="left:469.00px;top:156px;font-size:11.95px;font-weight:normal;color:#000;">Woche</div><div class="t" style="left:517.50px;top:156px;font-size:12.2px;font-weight:normal;color:#000;">Monat</div><div class="t" style="left:562.50px;top:156px;font-size:12px;font-weight:normal;color:#000;letter-spacing:-0.948px;">Jahr</div><div class="a" style="left:589px;top:152px;width:79px;height:24px;background:#b4d6ef"></div><div class="t" style="left:595.00px;top:156px;font-size:12px;font-weight:bold;color:#000;letter-spacing:-0.181px;">Einzelzeiten</div><div class="a" style="left:279px;top:176px;width:1160px;height:2px;background:#acd2ee"></div><div class="a" style="left:279px;top:178px;width:1160px;height:840px;border-left:1px solid #bdbdbd;border-top:1px solid #bdbdbd;box-sizing:border-box"></div><svg class="a" style="left:306px;top:187px;" width="14" height="14" viewBox="0 0 14 14"><path d="M5 0h4v5h5v4H9v5H5V9H0V5h5z" fill="#97bf4a"/></svg><div class="t" style="left:288.50px;top:203px;font-size:11.8px;font-weight:normal;color:#000;">Nachtrag</div><svg class="a" style="left:364px;top:188px;" width="12" height="12" viewBox="0 0 12 12"><path d="M1.3 1.3l9.4 9.4M10.7 1.3l-9.4 9.4" stroke="#c8c8c8" stroke-width="2.6" stroke-linecap="round"/></svg><div class="t" style="left:348.00px;top:203px;font-size:12px;font-weight:normal;color:#a6a6a6;letter-spacing:-0.329px;">Löschen</div><svg class="a" style="left:422px;top:187px;" width="14" height="13" viewBox="0 0 14 13"><path d="M3.6 4.8V.6h7.4v4.2" fill="none" stroke="#2f8ed6" stroke-width="1.1"/><path d="M5.4 2.2h3.8M5.4 3.6h3.8" stroke="#2f8ed6" stroke-width=".9" stroke-linecap="round"/><rect x=".6" y="6" width="13" height="6.8" rx="2.2" fill="#1a1a1a"/><rect x="2.2" y="9.4" width="9.8" height="2" rx=".5" fill="#fff"/><rect x="2.2" y="7" width="2" height="1" fill="#ddd"/></svg><div class="t" style="left:407.40px;top:203px;font-size:12px;font-weight:normal;color:#000;letter-spacing:-0.281px;">Drucken</div><svg class="a" style="left:463px;top:200px;" width="8" height="5" viewBox="0 0 8 5"><path d="M0 0H7.5L3.75 4z" fill="#222"/></svg><div class="a" style="left:475px;top:181px;width:1px;height:42px;background:#a0a0a0"></div><svg class="a" style="left:511px;top:187px;" width="12" height="13" viewBox="0 0 12 13"><path d="M2.2 5.7A4.4 4.4 0 1 0 6.2 3.2" fill="none" stroke="#111" stroke-width="1.6"/><path d="M6.6 .4L3.2 3.3l3.4 2.8" fill="none" stroke="#111" stroke-width="1.7"/></svg><div class="t" style="left:483.00px;top:203px;font-size:11.88px;font-weight:normal;color:#000;">Aktualisieren</div><div class="a" style="left:558px;top:181px;width:1px;height:42px;background:#a0a0a0"></div><svg class="a" style="left:581px;top:188px;" width="13" height="13" viewBox="0 0 13 13"><path d="M1 .4h10.6v2.8h-1.3V1.9H3.9l4.3 4.4-4.5 4.8h6.7V9.7h1.4v2.9H1v-1.2l5.2-5.1L1 1.4z" fill="#111"/></svg><div class="t" style="left:566.00px;top:203px;font-size:12px;font-weight:normal;color:#000;letter-spacing:-0.409px;">Runden</div><div class="a" style="left:614px;top:181px;width:1px;height:42px;background:#a0a0a0"></div><svg class="a" style="left:632px;top:185px;" width="16" height="16" viewBox="0 0 16 16"><path d="M5.3 .8A7.4 7.4 0 0 0 7.6 15.1V8.4z" fill="#222"/><path d="M9 8.8h6.4A7.4 7.4 0 0 1 9 15.1z" fill="#222"/><path d="M6.5 .4A7.4 7.4 0 0 1 15.4 7.6H9.4z" fill="#3a8ac4"/></svg><div class="t" style="left:626.00px;top:203px;font-size:11.86px;font-weight:normal;color:#000;">Chart</div><svg class="a" style="left:667px;top:200px;" width="8" height="5" viewBox="0 0 8 5"><path d="M0 0H7.5L3.75 4z" fill="#222"/></svg><div class="a" style="left:679px;top:181px;width:1px;height:42px;background:#a0a0a0"></div><svg class="a" style="left:709px;top:188px;" width="15" height="14" viewBox="0 0 15 14"><path d="M4.4 1.8c0-.8 1.2-1.3 2.7-1.3s2.7.5 2.7 1.3v4.6c0 .8-1.2 1.3-2.7 1.3s-2.7-.5-2.7-1.3z" fill="#e8e8e8" stroke="#999" stroke-width="1"/><path d="M7.6 2.6h2v4" fill="none" stroke="#8a8a8a" stroke-width="1.6"/><path d="M1.4 6.8c0-.8 1.2-1.3 2.7-1.3s2.7.5 2.7 1.3v4.4c0 .8-1.2 1.3-2.7 1.3s-2.7-.5-2.7-1.3z" fill="#e8e8e8" stroke="#999" stroke-width="1"/><path d="M4.6 7.6h2v4" fill="none" stroke="#8a8a8a" stroke-width="1.6"/><path d="M11 7.2v6M8 10.2h6" stroke="#c4c4c4" stroke-width="1.6"/></svg><div class="t" style="left:687.30px;top:203px;font-size:11.78px;font-weight:normal;color:#a6a6a6;">Abrechnen</div><div class="a" style="left:752px;top:181px;width:1px;height:42px;background:#a0a0a0"></div><svg class="a" style="left:762px;top:187px;" width="15" height="14" viewBox="0 0 15 14"><path d="M4.8 1.2v11M1.2 8.3l3.6 3.7 3.6-3.7" fill="none" stroke="#111" stroke-width="1.8"/><path d="M11 1v6M8 4h6" stroke="#2f8ed6" stroke-width="1.8"/></svg><div class="t" style="left:760.40px;top:203px;font-size:12.2px;font-weight:normal;color:#000;">Auf</div><svg class="a" style="left:789px;top:187px;" width="15" height="14" viewBox="0 0 15 14"><path d="M4.8 12.8v-11M1.2 5.3l3.6-3.7 3.6 3.7" fill="none" stroke="#111" stroke-width="1.8"/><path d="M8 10h6" stroke="#2f8ed6" stroke-width="1.8"/></svg><div class="t" style="left:790.00px;top:203px;font-size:12px;font-weight:normal;color:#000;letter-spacing:-0.416px;">Zu</div><div class="a" style="left:811px;top:181px;width:1px;height:42px;background:#a0a0a0"></div><svg class="a" style="left:843px;top:188px;" width="11" height="13" viewBox="0 0 11 13"><rect x=".5" y=".5" width="9.4" height="11.4" rx=".8" fill="#fff" stroke="#3a96d6" stroke-width="1"/><path d="M3 4.5l1.3 1.3 2.8-3M3 8.5l1.3 1.3 2.8-3" fill="none" stroke="#222" stroke-width="1.1"/></svg><div class="t" style="left:823.60px;top:203px;font-size:12.0px;font-weight:normal;color:#000;">Optionen</div><svg class="a" style="left:885px;top:200px;" width="8" height="5" viewBox="0 0 8 5"><path d="M0 0H7.5L3.75 4z" fill="#222"/></svg><div class="a" style="left:283px;top:225px;width:1160px;height:1px;background:#a0a0a0"></div><svg class="a" style="left:310px;top:235px;" width="15" height="14" viewBox="0 0 15 14"><path d="M.6 11.6V2.4c0-.8.4-1.2 1.2-1.2h3.6l1.6 1.6h5.2v2.8" fill="#fff" stroke="#1a1a1a" stroke-width="1.1"/><rect x="2.2" y="4.6" width="10.8" height="8.4" rx="1" fill="#1f1f1f"/><path d="M4.4 9.2l3 2.6 5.8-5.6" fill="none" stroke="#3d9fe0" stroke-width="2.4"/></svg><div class="t" style="left:292.20px;top:251px;font-size:12px;font-weight:normal;color:#000;letter-spacing:-0.277px;">G:Projekt</div><svg class="a" style="left:352px;top:248px;" width="8" height="5" viewBox="0 0 8 5"><path d="M0 0H7.5L3.75 4z" fill="#222"/></svg><svg class="a" style="left:397px;top:235px;" width="11" height="14" viewBox="0 0 11 14"><rect x=".5" y=".5" width="10" height="13" rx="1" fill="#222"/><rect x="2" y="2" width="7" height="2.4" fill="#5aa5e0"/><path d="M2 6h1.8v1.6H2zM4.6 6h1.8v1.6H4.6zM7.2 6H9v1.6H7.2zM2 8.4h1.8V10H2zM4.6 8.4h1.8V10H4.6zM7.2 8.4H9V10H7.2zM2 10.8h1.8v1.6H2zM4.6 10.8h1.8v1.6H4.6zM7.2 10.8H9v1.6H7.2z" fill="#fff"/></svg><div class="t" style="left:372.20px;top:251px;font-size:12.28px;font-weight:normal;color:#000;">Abr.modus</div><svg class="a" style="left:443px;top:248px;" width="8" height="5" viewBox="0 0 8 5"><path d="M0 0H7.5L3.75 4z" fill="#222"/></svg><svg class="a" style="left:488px;top:234px;" width="14" height="14" viewBox="0 0 14 14"><path d="M0 2.2C0 1 3.1.4 7 .4s7 .6 7 1.8c0 1-3 4.6-5 5.8V13H5V8C3 6.8 0 3.2 0 2.2z" fill="#1e1e1e"/><ellipse cx="7" cy="2" rx="4.8" ry=".8" fill="#fff"/></svg><div class="t" style="left:462.50px;top:251px;font-size:12px;font-weight:normal;color:#000;letter-spacing:-0.141px;">Zeitst.status</div><svg class="a" style="left:538px;top:248px;" width="8" height="5" viewBox="0 0 8 5"><path d="M0 0H7.5L3.75 4z" fill="#222"/></svg><svg class="a" style="left:585px;top:234px;" width="13" height="15" viewBox="0 0 13 15"><rect x=".6" y="6" width="11.6" height="8.3" rx=".8" fill="#fff" stroke="#1a1a1a" stroke-width="1.1"/><rect x=".2" y="2.6" width="12.2" height="3.6" fill="#2f8ed6"/><path d="M2.4 .6v2.6M5.4 .6v2.6M8.4 .6v2.6M11.4 .6v2.6" stroke="#1a1a1a" stroke-width="1"/><path d="M2.6 8.2l1.2-.6v5M2.6 12.6h2.4M6.6 8.4c.4-.6 1-.8 1.6-.8 1 0 1.6.6 1.6 1.3 0 1.4-3.2 2.4-3.2 3.7h3.3" fill="none" stroke="#111" stroke-width="1"/></svg><div class="t" style="left:558.00px;top:251px;font-size:12.13px;font-weight:normal;color:#000;">Datumsfilter</div><svg class="a" style="left:635px;top:248px;" width="8" height="5" viewBox="0 0 8 5"><path d="M0 0H7.5L3.75 4z" fill="#222"/></svg><svg class="a" style="left:693px;top:235px;" width="11" height="14" viewBox="0 0 11 14"><rect x=".3" y=".3" width="10.4" height="13.4" rx="1.6" fill="#1a1a1a"/><rect x="2" y="2" width="7" height="4.6" fill="#3d9fe0"/><rect x="2" y="7.4" width="7" height="4.6" fill="#3d9fe0"/><path d="M3.8 4.2h3.4M3.8 9.6h3.4" stroke="#fff" stroke-width="1"/></svg><div class="t" style="left:655.00px;top:251px;font-size:11.92px;font-weight:normal;color:#000;">Buchungsarchiv</div><svg class="a" style="left:752px;top:248px;" width="8" height="5" viewBox="0 0 8 5"><path d="M0 0H7.5L3.75 4z" fill="#222"/></svg><div class="a" style="left:283px;top:275px;width:1160px;height:1px;background:#a0a0a0"></div><svg class="a" style="left:299px;top:287px;" width="15" height="14" viewBox="0 0 15 14"><rect x=".6" y=".6" width="12.8" height="11.4" rx="1.2" fill="#fff" stroke="#1a1a1a" stroke-width="1.1"/><path d="M1 4h12M1 6.8h12M1 9.6h12M3.6 2v10M6.4 2v10M9.2 2v10" stroke="#555" stroke-width="1"/><rect x="6" y="6" width="8" height="8" fill="#1a1a1a"/><rect x="7.4" y="6.6" width="5.2" height="3.2" fill="#fff"/><rect x="7.4" y="6.6" width="5.2" height="1" fill="#3d9fe0"/><rect x="10.4" y="11" width="1.4" height="2" fill="#fff"/></svg><div class="t" style="left:318.60px;top:285px;font-size:12.0px;font-weight:normal;color:#000;">Ansicht</div><svg class="a" style="left:372px;top:291px;" width="8" height="5" viewBox="0 0 8 5"><path d="M0 0H7.5L3.75 4z" fill="#222"/></svg><div class="a" style="left:384px;top:280px;width:1px;height:26px;background:#a0a0a0"></div><div class="a" style="left:283px;top:310px;width:1160px;height:1px;background:#a0a0a0"></div><div class="t" style="left:287.30px;top:321px;font-size:11.96px;font-weight:normal;color:#000;"><u>S</u>uchbegriff</div><div class="a" style="left:356px;top:316px;width:170px;height:23px;border:1px solid #7a7a7a;box-sizing:border-box;background:#fff"></div><svg class="a" style="left:505.5px;top:320px;" width="16" height="13" viewBox="0 0 16 13"><path d="M3.2 .6h2.9l.7.9h1.6l.7-.9h2.9l3.3 8H0z" fill="#1e1e1e"/><circle cx="3.7" cy="8.6" r="3.1" fill="#3d9be0" stroke="#1e1e1e" stroke-width="1.3"/><circle cx="11.4" cy="8.6" r="3.1" fill="#3d9be0" stroke="#1e1e1e" stroke-width="1.3"/><path d="M2.2 7.6a1.8 1.8 0 0 1 1.6-1.3M9.9 7.6a1.8 1.8 0 0 1 1.6-1.3" stroke="#dff0fb" stroke-width=".8" fill="none"/></svg><div class="a" style="left:283px;top:345px;width:1160px;height:1px;background:#a0a0a0"></div><div class="t" style="left:286.60px;top:353px;font-size:11.2px;font-weight:bold;color:#000;">Filter:</div><div class="t" style="left:321.00px;top:353px;font-size:12.2px;font-weight:normal;color:#000;">[Gamma GmbH] [Alle Mitarbeiter]</div><div class="t" style="left:504.80px;top:355px;font-size:10.4px;font-weight:normal;color:#1c1ca8;">[Alles]</div><div class="t" style="left:537.00px;top:354px;font-size:11.0px;font-weight:normal;color:#4a8c1c;">[G: Projekt]</div><div class="a" style="left:283px;top:374px;width:1155px;height:241px;border:1px solid #abadb3;box-sizing:border-box"></div><div class="t" style="left:291.30px;top:380px;font-size:12.6px;font-weight:normal;color:#000;">Von / Bis</div><div class="t" style="left:541.40px;top:380px;font-size:12.6px;font-weight:normal;color:#000;">Status</div><svg class="a" style="left:585px;top:384px;" width="10" height="6" viewBox="0 0 10 6"><path d="M0 0h9.6L4.8 5.5z" fill="#a6a6a6"/></svg><div class="t" style="left:314.30px;width:400px;text-align:right;top:380px;font-size:12.6px;font-weight:normal;color:#000;">Pause</div><div class="t" style="left:727.80px;top:380px;font-size:12.6px;font-weight:normal;color:#000;">Stund...</div><div class="t" style="left:450.00px;width:400px;text-align:right;top:380px;font-size:12.6px;font-weight:normal;color:#000;">Intern</div><div class="t" style="left:529.70px;width:400px;text-align:right;top:380px;font-size:12.6px;font-weight:normal;color:#000;">Preis</div><div class="t" style="left:942.00px;top:380px;font-size:12.6px;font-weight:normal;color:#000;">Projektname</div><div class="t" style="left:1142.00px;top:380px;font-size:12.6px;font-weight:normal;color:#000;">Kommentar</div><div class="a" style="left:534px;top:378px;width:1px;height:18px;background:#e6e6e6"></div><div class="a" style="left:665px;top:378px;width:1px;height:18px;background:#e6e6e6"></div><div class="a" style="left:720px;top:378px;width:1px;height:18px;background:#e6e6e6"></div><div class="a" style="left:775px;top:378px;width:1px;height:18px;background:#e6e6e6"></div><div class="a" style="left:855px;top:378px;width:1px;height:18px;background:#e6e6e6"></div><div class="a" style="left:935px;top:378px;width:1px;height:18px;background:#e6e6e6"></div><div class="a" style="left:1135px;top:378px;width:1px;height:18px;background:#e6e6e6"></div><div class="a" style="left:1435px;top:378px;width:1px;height:18px;background:#e6e6e6"></div><div class="a" style="left:299px;top:407px;width:6px;height:1px;background-image:linear-gradient(to right,#9a9a9a 50%,transparent 50%);background-size:2px 1px;"></div><div class="a" style="left:284px;top:418px;width:1151px;height:1px;background-image:linear-gradient(to right,#e2e2e2 50%,transparent 50%);background-size:2px 1px;"></div><svg class="a" style="left:308px;top:401px;" width="15" height="14" viewBox="0 0 15 14"><path d="M2 2.5l2 2M13 2.5l-2 2M.5 7.5h2.5M12 7.5h2.5M2 12.5l2-2" stroke="#222" stroke-width="1.2"/><ellipse cx="7.5" cy="3" rx="3.2" ry="2" fill="#333"/><circle cx="7.5" cy="7.5" r="5.3" fill="#e8b828" stroke="#9a7a10" stroke-width=".8"/><circle cx="7.6" cy="7.3" r="3.4" fill="#a8dcf8" stroke="#555" stroke-width="1"/><path d="M10 10.2l3.2 3.2" stroke="#f07030" stroke-width="2.4" stroke-linecap="round"/></svg><div class="t" style="left:329.60px;top:401px;font-size:13.0px;font-weight:bold;color:#000080;">Maintenance Transformer #5556 <span style="font-size:10px;position:relative;top:-1px">»</span> Testing</div><div class="t" style="left:598.50px;top:401px;font-size:10.87px;font-weight:normal;color:#8a8a8a;">(2,83h) (Intern: 212,50 €)</div><div class="a" style="left:284px;top:419px;width:1151px;height:20px;background:#ebfddc"></div><div class="a" style="left:284px;top:438px;width:1151px;height:1px;background-image:linear-gradient(to right,#ffffff 50%,transparent 50%);background-size:2px 1px;"></div><div class="a" style="left:534px;top:419px;width:1px;height:19px;background-image:linear-gradient(to bottom,#ffffff 50%,transparent 50%);background-size:1px 2px;"></div><div class="a" style="left:665px;top:419px;width:1px;height:19px;background-image:linear-gradient(to bottom,#ffffff 50%,transparent 50%);background-size:1px 2px;"></div><div class="a" style="left:720px;top:419px;width:1px;height:19px;background-image:linear-gradient(to bottom,#ffffff 50%,transparent 50%);background-size:1px 2px;"></div><div class="a" style="left:775px;top:419px;width:1px;height:19px;background-image:linear-gradient(to bottom,#ffffff 50%,transparent 50%);background-size:1px 2px;"></div><div class="a" style="left:855px;top:419px;width:1px;height:19px;background-image:linear-gradient(to bottom,#ffffff 50%,transparent 50%);background-size:1px 2px;"></div><div class="a" style="left:935px;top:419px;width:1px;height:19px;background-image:linear-gradient(to bottom,#ffffff 50%,transparent 50%);background-size:1px 2px;"></div><div class="a" style="left:1135px;top:419px;width:1px;height:19px;background-image:linear-gradient(to bottom,#ffffff 50%,transparent 50%);background-size:1px 2px;"></div><div class="t" style="left:329.60px;top:422px;font-size:12.05px;font-weight:normal;color:#000;">25.04.2018</div><div class="t" style="left:404.00px;top:422px;font-size:12.49px;font-weight:normal;color:#000;">13:31 - 15:45</div><div class="t" style="left:487.00px;top:422px;font-size:8.8px;font-weight:normal;color:#9a9a9a;">(N)</div><div class="t" style="left:543.20px;top:422px;font-size:12.77px;font-weight:normal;color:#000;">Bereits verrechnet</div><div class="t" style="left:370.20px;width:400px;text-align:right;top:422px;font-size:12.2px;font-weight:normal;color:#000;">2,23</div><div class="t" style="left:451.00px;width:400px;text-align:right;top:422px;font-size:12.6px;font-weight:normal;color:#000;">167,50 €</div><div class="t" style="left:531.00px;width:400px;text-align:right;top:422px;font-size:12.6px;font-weight:normal;color:#000;">0,00 €</div><div class="t" style="left:944.30px;top:422px;font-size:12.93px;font-weight:normal;color:#000;">Maintenance Transformer #55...</div><div class="t" style="left:1144.40px;top:422px;font-size:13.17px;font-weight:normal;color:#000;">Changed the configuration of the machine</div><svg class="a" style="left:1430px;top:419px;" width="6" height="6" viewBox="0 0 6 6"><path d="M0 0h6v6z" fill="#d48a92"/></svg><div class="a" style="left:284px;top:439px;width:1151px;height:20px;background:#ebfddc"></div><div class="a" style="left:284px;top:458px;width:1151px;height:1px;background-image:linear-gradient(to right,#ffffff 50%,transparent 50%);background-size:2px 1px;"></div><div class="a" style="left:534px;top:439px;width:1px;height:19px;background-image:linear-gradient(to bottom,#ffffff 50%,transparent 50%);background-size:1px 2px;"></div><div class="a" style="left:665px;top:439px;width:1px;height:19px;background-image:linear-gradient(to bottom,#ffffff 50%,transparent 50%);background-size:1px 2px;"></div><div class="a" style="left:720px;top:439px;width:1px;height:19px;background-image:linear-gradient(to bottom,#ffffff 50%,transparent 50%);background-size:1px 2px;"></div><div class="a" style="left:775px;top:439px;width:1px;height:19px;background-image:linear-gradient(to bottom,#ffffff 50%,transparent 50%);background-size:1px 2px;"></div><div class="a" style="left:855px;top:439px;width:1px;height:19px;background-image:linear-gradient(to bottom,#ffffff 50%,transparent 50%);background-size:1px 2px;"></div><div class="a" style="left:935px;top:439px;width:1px;height:19px;background-image:linear-gradient(to bottom,#ffffff 50%,transparent 50%);background-size:1px 2px;"></div><div class="a" style="left:1135px;top:439px;width:1px;height:19px;background-image:linear-gradient(to bottom,#ffffff 50%,transparent 50%);background-size:1px 2px;"></div><div class="t" style="left:329.60px;top:442px;font-size:12.05px;font-weight:normal;color:#000;">13.04.2018</div><div class="t" style="left:404.00px;top:442px;font-size:12.49px;font-weight:normal;color:#000;">16:24 - 17:00</div><div class="t" style="left:487.00px;top:442px;font-size:8.8px;font-weight:normal;color:#9a9a9a;">(N)</div><div class="t" style="left:543.20px;top:442px;font-size:12.77px;font-weight:normal;color:#000;">Bereits verrechnet</div><div class="t" style="left:370.20px;width:400px;text-align:right;top:442px;font-size:12.2px;font-weight:normal;color:#000;">0,60</div><div class="t" style="left:451.00px;width:400px;text-align:right;top:442px;font-size:12.6px;font-weight:normal;color:#000;">45,00 €</div><div class="t" style="left:531.00px;width:400px;text-align:right;top:442px;font-size:12.6px;font-weight:normal;color:#000;">0,00 €</div><div class="t" style="left:944.30px;top:442px;font-size:12.93px;font-weight:normal;color:#000;">Maintenance Transformer #55...</div><div class="a" style="left:299px;top:469px;width:6px;height:1px;background-image:linear-gradient(to right,#9a9a9a 50%,transparent 50%);background-size:2px 1px;"></div><div class="a" style="left:284px;top:480px;width:1151px;height:1px;background-image:linear-gradient(to right,#e2e2e2 50%,transparent 50%);background-size:2px 1px;"></div><svg class="a" style="left:308px;top:463px;" width="15" height="15" viewBox="0 0 15 15"><rect x=".5" y=".5" width="14" height="14" fill="#eef0f8" stroke="#8c90a8" stroke-width="1"/><path d="M1 5h13M1 9.5h13M5 1v13M9.5 1v13" stroke="#c4c8da" stroke-width=".8"/><path d="M1 6.2l2.4-1.4 2.6 1.8 2.2-1.6 1.8 1.4 3.6-4.6" fill="none" stroke="#2fa02f" stroke-width="1.3"/><path d="M1 12.6l2.6-1.6 1.8-3.8 2.4 1.6 2-2.6 2 1.2 2.2-.6" fill="none" stroke="#2f7fd8" stroke-width="1.3"/></svg><div class="t" style="left:329.60px;top:463px;font-size:13.0px;font-weight:bold;color:#000080;">Maintenance Transformer #5556 <span style="font-size:10px;position:relative;top:-1px">»</span> Add new cable</div><div class="t" style="left:642.80px;top:463px;font-size:10.87px;font-weight:normal;color:#8a8a8a;">(10,98h) (Intern: 823,75 € / Preis: 123,33 €)</div><div class="a" style="left:284px;top:481px;width:1151px;height:20px;background:#ebfddc"></div><div class="a" style="left:284px;top:500px;width:1151px;height:1px;background-image:linear-gradient(to right,#ffffff 50%,transparent 50%);background-size:2px 1px;"></div><div class="a" style="left:534px;top:481px;width:1px;height:19px;background-image:linear-gradient(to bottom,#ffffff 50%,transparent 50%);background-size:1px 2px;"></div><div class="a" style="left:665px;top:481px;width:1px;height:19px;background-image:linear-gradient(to bottom,#ffffff 50%,transparent 50%);background-size:1px 2px;"></div><div class="a" style="left:720px;top:481px;width:1px;height:19px;background-image:linear-gradient(to bottom,#ffffff 50%,transparent 50%);background-size:1px 2px;"></div><div class="a" style="left:775px;top:481px;width:1px;height:19px;background-image:linear-gradient(to bottom,#ffffff 50%,transparent 50%);background-size:1px 2px;"></div><div class="a" style="left:855px;top:481px;width:1px;height:19px;background-image:linear-gradient(to bottom,#ffffff 50%,transparent 50%);background-size:1px 2px;"></div><div class="a" style="left:935px;top:481px;width:1px;height:19px;background-image:linear-gradient(to bottom,#ffffff 50%,transparent 50%);background-size:1px 2px;"></div><div class="a" style="left:1135px;top:481px;width:1px;height:19px;background-image:linear-gradient(to bottom,#ffffff 50%,transparent 50%);background-size:1px 2px;"></div><div class="t" style="left:329.60px;top:484px;font-size:12.05px;font-weight:normal;color:#000;">26.04.2018</div><div class="t" style="left:404.00px;top:484px;font-size:12.49px;font-weight:normal;color:#000;">11:28 - 13:56</div><div class="t" style="left:543.20px;top:484px;font-size:12.77px;font-weight:normal;color:#000;">Bereits verrechnet</div><div class="t" style="left:370.20px;width:400px;text-align:right;top:484px;font-size:12.2px;font-weight:normal;color:#000;">2,47</div><div class="t" style="left:451.00px;width:400px;text-align:right;top:484px;font-size:12.6px;font-weight:normal;color:#000;">185,00 €</div><div class="t" style="left:531.00px;width:400px;text-align:right;top:484px;font-size:12.6px;font-weight:normal;color:#000;">123,33 €</div><div class="t" style="left:944.30px;top:484px;font-size:12.93px;font-weight:normal;color:#000;">Maintenance Transformer #55...</div><div class="t" style="left:1144.40px;top:484px;font-size:13.17px;font-weight:normal;color:#000;">Reviewed the manual</div><svg class="a" style="left:1430px;top:481px;" width="6" height="6" viewBox="0 0 6 6"><path d="M0 0h6v6z" fill="#d48a92"/></svg><div class="a" style="left:284px;top:501px;width:1151px;height:20px;background:#ebfddc"></div><div class="a" style="left:284px;top:520px;width:1151px;height:1px;background-image:linear-gradient(to right,#ffffff 50%,transparent 50%);background-size:2px 1px;"></div><div class="a" style="left:534px;top:501px;width:1px;height:19px;background-image:linear-gradient(to bottom,#ffffff 50%,transparent 50%);background-size:1px 2px;"></div><div class="a" style="left:665px;top:501px;width:1px;height:19px;background-image:linear-gradient(to bottom,#ffffff 50%,transparent 50%);background-size:1px 2px;"></div><div class="a" style="left:720px;top:501px;width:1px;height:19px;background-image:linear-gradient(to bottom,#ffffff 50%,transparent 50%);background-size:1px 2px;"></div><div class="a" style="left:775px;top:501px;width:1px;height:19px;background-image:linear-gradient(to bottom,#ffffff 50%,transparent 50%);background-size:1px 2px;"></div><div class="a" style="left:855px;top:501px;width:1px;height:19px;background-image:linear-gradient(to bottom,#ffffff 50%,transparent 50%);background-size:1px 2px;"></div><div class="a" style="left:935px;top:501px;width:1px;height:19px;background-image:linear-gradient(to bottom,#ffffff 50%,transparent 50%);background-size:1px 2px;"></div><div class="a" style="left:1135px;top:501px;width:1px;height:19px;background-image:linear-gradient(to bottom,#ffffff 50%,transparent 50%);background-size:1px 2px;"></div><div class="t" style="left:329.60px;top:504px;font-size:12.05px;font-weight:normal;color:#000;">13.04.2018</div><div class="t" style="left:404.00px;top:504px;font-size:12.49px;font-weight:normal;color:#000;">07:52 - 16:23</div><div class="t" style="left:487.00px;top:504px;font-size:8.8px;font-weight:normal;color:#9a9a9a;">(N)</div><div class="t" style="left:543.20px;top:504px;font-size:12.77px;font-weight:normal;color:#000;">Bereits verrechnet</div><div class="t" style="left:370.20px;width:400px;text-align:right;top:504px;font-size:12.2px;font-weight:normal;color:#000;">8,52</div><div class="t" style="left:451.00px;width:400px;text-align:right;top:504px;font-size:12.6px;font-weight:normal;color:#000;">638,75 €</div><div class="t" style="left:531.00px;width:400px;text-align:right;top:504px;font-size:12.6px;font-weight:normal;color:#000;">0,00 €</div><div class="t" style="left:944.30px;top:504px;font-size:12.93px;font-weight:normal;color:#000;">Maintenance Transformer #55...</div><div class="a" style="left:299px;top:531px;width:6px;height:1px;background-image:linear-gradient(to right,#9a9a9a 50%,transparent 50%);background-size:2px 1px;"></div><div class="a" style="left:284px;top:542px;width:1151px;height:1px;background-image:linear-gradient(to right,#e2e2e2 50%,transparent 50%);background-size:2px 1px;"></div><div class="t" style="left:311.00px;top:525px;font-size:13.0px;font-weight:bold;color:#000080;">Maintenance Transformer #5556 <span style="font-size:10px;position:relative;top:-1px">»</span> [8888] Support 1</div><div class="t" style="left:636.40px;top:525px;font-size:10.87px;font-weight:normal;color:#8a8a8a;">(0,05h) (Intern: 3,75 €)</div><div class="a" style="left:284px;top:543px;width:1151px;height:20px;background:#ebfddc"></div><div class="a" style="left:284px;top:562px;width:1151px;height:1px;background-image:linear-gradient(to right,#ffffff 50%,transparent 50%);background-size:2px 1px;"></div><div class="a" style="left:534px;top:543px;width:1px;height:19px;background-image:linear-gradient(to bottom,#ffffff 50%,transparent 50%);background-size:1px 2px;"></div><div class="a" style="left:665px;top:543px;width:1px;height:19px;background-image:linear-gradient(to bottom,#ffffff 50%,transparent 50%);background-size:1px 2px;"></div><div class="a" style="left:720px;top:543px;width:1px;height:19px;background-image:linear-gradient(to bottom,#ffffff 50%,transparent 50%);background-size:1px 2px;"></div><div class="a" style="left:775px;top:543px;width:1px;height:19px;background-image:linear-gradient(to bottom,#ffffff 50%,transparent 50%);background-size:1px 2px;"></div><div class="a" style="left:855px;top:543px;width:1px;height:19px;background-image:linear-gradient(to bottom,#ffffff 50%,transparent 50%);background-size:1px 2px;"></div><div class="a" style="left:935px;top:543px;width:1px;height:19px;background-image:linear-gradient(to bottom,#ffffff 50%,transparent 50%);background-size:1px 2px;"></div><div class="a" style="left:1135px;top:543px;width:1px;height:19px;background-image:linear-gradient(to bottom,#ffffff 50%,transparent 50%);background-size:1px 2px;"></div><div class="t" style="left:329.60px;top:546px;font-size:12.05px;font-weight:normal;color:#000;">26.04.2018</div><div class="t" style="left:404.00px;top:546px;font-size:12.49px;font-weight:normal;color:#000;">13:57 - 14:00</div><div class="t" style="left:543.20px;top:546px;font-size:12.77px;font-weight:normal;color:#000;">Bereits verrechnet</div><div class="t" style="left:370.20px;width:400px;text-align:right;top:546px;font-size:12.2px;font-weight:normal;color:#000;">0,05</div><div class="t" style="left:451.00px;width:400px;text-align:right;top:546px;font-size:12.6px;font-weight:normal;color:#000;">3,75 €</div><div class="t" style="left:531.00px;width:400px;text-align:right;top:546px;font-size:12.6px;font-weight:normal;color:#000;">0,00 €</div><div class="t" style="left:944.30px;top:546px;font-size:12.93px;font-weight:normal;color:#000;">Maintenance Transformer #55...</div><div class="a" style="left:284px;top:584px;width:1151px;height:1px;background-image:linear-gradient(to right,#e2e2e2 50%,transparent 50%);background-size:2px 1px;"></div><div class="a" style="left:534px;top:563px;width:1px;height:21px;background-image:linear-gradient(to bottom,#e6e6e6 50%,transparent 50%);background-size:1px 2px;"></div><div class="a" style="left:665px;top:563px;width:1px;height:21px;background-image:linear-gradient(to bottom,#e6e6e6 50%,transparent 50%);background-size:1px 2px;"></div><div class="a" style="left:720px;top:563px;width:1px;height:21px;background-image:linear-gradient(to bottom,#e6e6e6 50%,transparent 50%);background-size:1px 2px;"></div><div class="a" style="left:775px;top:563px;width:1px;height:21px;background-image:linear-gradient(to bottom,#e6e6e6 50%,transparent 50%);background-size:1px 2px;"></div><div class="a" style="left:855px;top:563px;width:1px;height:21px;background-image:linear-gradient(to bottom,#e6e6e6 50%,transparent 50%);background-size:1px 2px;"></div><div class="a" style="left:935px;top:563px;width:1px;height:21px;background-image:linear-gradient(to bottom,#e6e6e6 50%,transparent 50%);background-size:1px 2px;"></div><div class="a" style="left:1135px;top:563px;width:1px;height:21px;background-image:linear-gradient(to bottom,#e6e6e6 50%,transparent 50%);background-size:1px 2px;"></div><div class="a" style="left:1435px;top:563px;width:1px;height:21px;background-image:linear-gradient(to bottom,#e6e6e6 50%,transparent 50%);background-size:1px 2px;"></div><div class="t" style="left:311.00px;top:567px;font-size:12.0px;font-weight:bold;color:#808080;">Gesamt:</div><div class="t" style="left:370.20px;width:400px;text-align:right;top:567px;font-size:12.3px;font-weight:bold;color:#808080;">13,87</div><div class="t" style="left:451.00px;width:400px;text-align:right;top:567px;font-size:12.3px;font-weight:bold;color:#808080;">1.040,00 €</div><div class="t" style="left:531.00px;width:400px;text-align:right;top:567px;font-size:12.3px;font-weight:bold;color:#808080;">123,33 €</div><div class="a" style="left:294px;top:412px;width:1px;height:161px;background-image:linear-gradient(to bottom,#8c8c8c 50%,transparent 50%);background-size:1px 2px;"></div><div class="a" style="left:294px;top:573px;width:10px;height:1px;background-image:linear-gradient(to right,#8c8c8c 50%,transparent 50%);background-size:2px 1px;"></div><div class="a" style="left:312px;top:419px;width:1px;height:29px;background-image:linear-gradient(to bottom,#8c8c8c 50%,transparent 50%);background-size:1px 2px;"></div><div class="a" style="left:312px;top:428px;width:9px;height:1px;background-image:linear-gradient(to right,#8c8c8c 50%,transparent 50%);background-size:2px 1px;"></div><div class="a" style="left:312px;top:448px;width:9px;height:1px;background-image:linear-gradient(to right,#8c8c8c 50%,transparent 50%);background-size:2px 1px;"></div><div class="a" style="left:312px;top:481px;width:1px;height:29px;background-image:linear-gradient(to bottom,#8c8c8c 50%,transparent 50%);background-size:1px 2px;"></div><div class="a" style="left:312px;top:490px;width:9px;height:1px;background-image:linear-gradient(to right,#8c8c8c 50%,transparent 50%);background-size:2px 1px;"></div><div class="a" style="left:312px;top:510px;width:9px;height:1px;background-image:linear-gradient(to right,#8c8c8c 50%,transparent 50%);background-size:2px 1px;"></div><div class="a" style="left:312px;top:543px;width:1px;height:9px;background-image:linear-gradient(to bottom,#8c8c8c 50%,transparent 50%);background-size:1px 2px;"></div><div class="a" style="left:312px;top:552px;width:9px;height:1px;background-image:linear-gradient(to right,#8c8c8c 50%,transparent 50%);background-size:2px 1px;"></div><div class="a" style="left:290px;top:403px;width:9px;height:9px;border:1px solid #9a9a9a;border-radius:1px;box-sizing:border-box;background:linear-gradient(#fff,#e2e2e2)"></div><div class="a" style="left:292px;top:407px;width:5px;height:1px;background:#3c4f9c"></div><div class="a" style="left:290px;top:465px;width:9px;height:9px;border:1px solid #9a9a9a;border-radius:1px;box-sizing:border-box;background:linear-gradient(#fff,#e2e2e2)"></div><div class="a" style="left:292px;top:469px;width:5px;height:1px;background:#3c4f9c"></div><div class="a" style="left:290px;top:527px;width:9px;height:9px;border:1px solid #9a9a9a;border-radius:1px;box-sizing:border-box;background:linear-gradient(#fff,#e2e2e2)"></div><div class="a" style="left:292px;top:531px;width:5px;height:1px;background:#3c4f9c"></div><div class="a" style="left:283px;top:614px;width:1160px;height:1px;background:#a0a0a0"></div><div class="a" style="left:1023px;top:617px;width:1px;height:1px;background:#888"></div><div class="a" style="left:1026px;top:617px;width:1px;height:1px;background:#888"></div><div class="a" style="left:1029px;top:617px;width:1px;height:1px;background:#888"></div><div class="a" style="left:1032px;top:617px;width:1px;height:1px;background:#888"></div><div class="a" style="left:1035px;top:617px;width:1px;height:1px;background:#888"></div><div class="a" style="left:1038px;top:617px;width:1px;height:1px;background:#888"></div><div class="a" style="left:1041px;top:617px;width:1px;height:1px;background:#888"></div><div class="a" style="left:1044px;top:617px;width:1px;height:1px;background:#888"></div><div class="a" style="left:1047px;top:617px;width:1px;height:1px;background:#888"></div><div class="a" style="left:1050px;top:617px;width:1px;height:1px;background:#888"></div><div class="a" style="left:1053px;top:617px;width:1px;height:1px;background:#888"></div><div class="a" style="left:1056px;top:617px;width:1px;height:1px;background:#888"></div><div class="a" style="left:1059px;top:617px;width:1px;height:1px;background:#888"></div><div class="a" style="left:1062px;top:617px;width:1px;height:1px;background:#888"></div><div class="a" style="left:1065px;top:617px;width:1px;height:1px;background:#888"></div><div class="a" style="left:1068px;top:617px;width:1px;height:1px;background:#888"></div><div class="a" style="left:1071px;top:617px;width:1px;height:1px;background:#888"></div><div class="a" style="left:1074px;top:617px;width:1px;height:1px;background:#888"></div><div class="a" style="left:1077px;top:617px;width:1px;height:1px;background:#888"></div><div class="a" style="left:1080px;top:617px;width:1px;height:1px;background:#888"></div><div class="a" style="left:1083px;top:617px;width:1px;height:1px;background:#888"></div><div class="a" style="left:1086px;top:617px;width:1px;height:1px;background:#888"></div><div class="a" style="left:1089px;top:617px;width:1px;height:1px;background:#888"></div><div class="a" style="left:1092px;top:617px;width:1px;height:1px;background:#888"></div><div class="a" style="left:1095px;top:617px;width:1px;height:1px;background:#888"></div><div class="a" style="left:1098px;top:617px;width:1px;height:1px;background:#888"></div><div class="a" style="left:1101px;top:617px;width:1px;height:1px;background:#888"></div><div class="a" style="left:1104px;top:617px;width:1px;height:1px;background:#888"></div><div class="a" style="left:1107px;top:617px;width:1px;height:1px;background:#888"></div><div class="a" style="left:1110px;top:617px;width:1px;height:1px;background:#888"></div><div class="a" style="left:1113px;top:617px;width:1px;height:1px;background:#888"></div><div class="a" style="left:1116px;top:617px;width:1px;height:1px;background:#888"></div><div class="a" style="left:1119px;top:617px;width:1px;height:1px;background:#888"></div><div class="a" style="left:1122px;top:617px;width:1px;height:1px;background:#888"></div><div class="a" style="left:1125px;top:617px;width:1px;height:1px;background:#888"></div><div class="a" style="left:1128px;top:617px;width:1px;height:1px;background:#888"></div><div class="a" style="left:1131px;top:617px;width:1px;height:1px;background:#888"></div><div class="a" style="left:1134px;top:617px;width:1px;height:1px;background:#888"></div><div class="a" style="left:1137px;top:617px;width:1px;height:1px;background:#888"></div><div class="a" style="left:1140px;top:617px;width:1px;height:1px;background:#888"></div><div class="a" style="left:1143px;top:617px;width:1px;height:1px;background:#888"></div><div class="a" style="left:1146px;top:617px;width:1px;height:1px;background:#888"></div><div class="a" style="left:1149px;top:617px;width:1px;height:1px;background:#888"></div><div class="a" style="left:1152px;top:617px;width:1px;height:1px;background:#888"></div><div class="a" style="left:1155px;top:617px;width:1px;height:1px;background:#888"></div><div class="a" style="left:1158px;top:617px;width:1px;height:1px;background:#888"></div><div class="a" style="left:1161px;top:617px;width:1px;height:1px;background:#888"></div><div class="a" style="left:283px;top:620px;width:1160px;height:400px;border-top:1px solid #a0a0a0;border-left:1px solid #a0a0a0;box-sizing:border-box"></div><div class="a" style="left:290px;top:627px;width:190px;height:83px;border:1px solid #7a7a7a;box-sizing:border-box;background:linear-gradient(#ffffff,#e6e6e6)"></div><div class="t" style="left:297.20px;top:631px;font-size:11.4px;font-weight:normal;color:#000;">Zeit benötigt</div><svg class="a" style="left:294.6px;top:650.6px;" width="17" height="16" viewBox="0 0 17 16"><path d="M8.2 8.2H15.6A7.4 7.4 0 1 1 11.9 1.8Z" fill="#7f99fc" stroke="#5a6fd0" stroke-width=".9" stroke-linejoin="round"/></svg><svg class="a" style="left:294.6px;top:669.8px;" width="17" height="16" viewBox="0 0 17 16"><path d="M8.2 8.2H15.6A7.4 7.4 0 1 1 11.9 1.8Z" fill="#edd04f" stroke="#b89a28" stroke-width=".9" stroke-linejoin="round"/></svg><svg class="a" style="left:294.6px;top:689.2px;" width="17" height="16" viewBox="0 0 17 16"><path d="M8.2 8.2H15.6A7.4 7.4 0 1 1 11.9 1.8Z" fill="#78b030" stroke="#4f8a1c" stroke-width=".9" stroke-linejoin="round"/></svg><div class="t" style="left:317.30px;top:650px;font-size:11.0px;font-weight:normal;color:#000;">Maintenance ...» Add new cable</div><div class="t" style="left:317.30px;top:669px;font-size:11.1px;font-weight:normal;color:#000;">Maintenance ...#5556 » Testing</div><div class="t" style="left:317.30px;top:689px;font-size:11.0px;font-weight:normal;color:#000;">Weitere</div><svg class="a" style="left:0;top:0" width="1438" height="1005" viewBox="0 0 1438 1005"><path d="M1134.97 960.38A200.5 115.0 0 0 1 883.25 849.20L883.25 882.20A200.5 115.0 0 0 0 1134.97 993.38Z" fill="#3e4d7e"/><path d="M1083.75 849.20L1284.25 849.20L1284.25 882.20L1083.75 882.20Z" fill="#3e4d7e"/><path d="M1099.75 856.70L1150.97 967.88L1150.97 1000.88L1099.75 889.70Z" fill="#776726"/><path d="M1300.20 859.31A200.5 115.0 0 0 1 1150.97 967.88L1150.97 1000.88A200.5 115.0 0 0 0 1300.20 892.31Z" fill="#776726"/><path d="M1300.25 856.70A200.5 115.0 0 0 1 1300.20 859.31L1300.20 892.31A200.5 115.0 0 0 0 1300.25 889.70Z" fill="#35541a"/><path d="M1083.75 849.20L1134.97 960.38A200.5 115.0 0 1 1 1284.25 849.20Z" fill="#7f99fc"/><path d="M1099.75 856.70L1300.20 859.31A200.5 115.0 0 0 1 1150.97 967.88Z" fill="#edd04f"/><path d="M1099.75 856.70L1300.25 856.70A200.5 115.0 0 0 1 1300.20 859.31Z" fill="#6aa52a"/><path d="M911 772L926 779" stroke="#bdbdbd" stroke-width="2"/><path d="M1300 856H1316" stroke="#bdbdbd" stroke-width="2"/><path d="M1257.8 924.4L1272 930.5" stroke="#bdbdbd" stroke-width="2"/></svg><div class="a" style="left:750px;top:758px;width:162px;height:30px;border:1px solid #8a8a8a;box-sizing:border-box;background:#fff"></div><div class="t" style="left:750px;width:162px;text-align:center;top:757px;font-size:10.9px">Maintenance ...» Add new cable</div><div class="t" style="left:750px;width:162px;text-align:center;top:770px;font-size:9.4px">79% - 10,98h</div><div class="a" style="left:1316px;top:842px;width:55px;height:30px;border:1px solid #8a8a8a;box-sizing:border-box;background:#fff"></div><div class="t" style="left:1316px;width:55px;text-align:center;top:841px;font-size:11.0px">Weitere</div><div class="t" style="left:1316px;width:55px;text-align:center;top:854px;font-size:9.5px">0% - 0,05h</div><div class="a" style="left:1272px;top:917px;width:162px;height:30px;border:1px solid #8a8a8a;box-sizing:border-box;background:#fff"></div><div class="t" style="left:1272px;width:162px;text-align:center;top:916px;font-size:11.1px">Maintenance ...#5556 » Testing</div><div class="t" style="left:1272px;width:162px;text-align:center;top:928px;font-size:9.3px">20% - 2,83h</div><svg class="a" style="left:0;top:0" width="1438" height="1005" viewBox="0 0 1438 1005"><defs><filter id="sh" x="-20%" y="-20%" width="140%" height="140%"><feGaussianBlur stdDeviation="2.2"/></filter></defs><g filter="url(#sh)" opacity="0.55"><rect x="590" y="148" width="84" height="39" fill="none" stroke="#555" stroke-width="3"/><path d="M211 472L566 203" stroke="#555" stroke-width="4"/><path d="M572 198L556 201L565 213z" fill="#555"/></g><rect x="586" y="144" width="85" height="40" fill="none" stroke="#c00000" stroke-width="2.2"/><path d="M206.7 467.2L556 201" stroke="#c00000" stroke-width="3.4"/><path d="M567.3 192.8L551.3 195.8L560 207.2z" fill="#c00000"/></svg></body></html>
